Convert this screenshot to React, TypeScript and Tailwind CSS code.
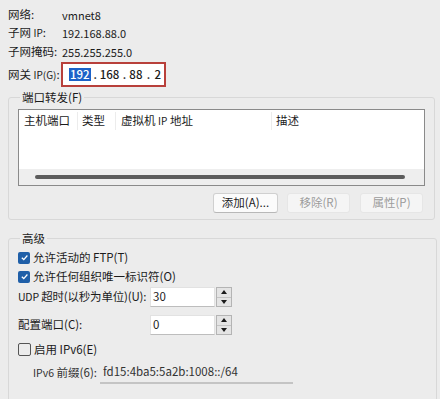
import React from "react";

function Spinner() {
  return (
    <div className="ml-[1px] flex h-[20px] w-[16px] flex-col border border-[#b4b4b4] bg-[#e4e4e4]">
      <div className="flex flex-1 items-center justify-center border-b border-[#c4c4c4]">
        <div className="h-0 w-0 border-x-[3.5px] border-b-[4px] border-x-transparent border-b-[#1b1b1b]" />
      </div>
      <div className="flex flex-1 items-center justify-center">
        <div className="h-0 w-0 border-x-[3.5px] border-t-[4px] border-x-transparent border-t-[#1b1b1b]" />
      </div>
    </div>
  );
}

function Checkbox({ checked, label }: { checked: boolean; label: string }) {
  return (
    <div className="flex h-[19px] items-center whitespace-nowrap">
      {checked ? (
        <div className="flex h-[12px] w-[12px] items-center justify-center rounded-[2px] bg-[#1f5fa8]">
          <svg width="9" height="9" viewBox="0 0 10 10">
            <path d="M2 5.2 L4.2 7.3 L8.2 2.8" fill="none" stroke="white" strokeWidth="1.4" />
          </svg>
        </div>
      ) : (
        <div className="h-[13px] w-[13px] rounded-[2px] border border-[#555]" />
      )}
      <span className="ml-[3px]">{label}</span>
    </div>
  );
}

function Button({ label, disabled, className }: { label: string; disabled?: boolean; className: string }) {
  return (
    <div
      className={
        disabled
          ? `flex h-[20px] items-center justify-center rounded-[3px] border border-[#e6e6e6] bg-[#f5f5f5] text-[#9c9c9c] ${className}`
          : `flex h-[20px] items-center justify-center rounded-[3px] border border-[#d0d0d0] border-b-[#b8b8b8] bg-[#fbfbfb] ${className}`
      }
    >
      {label}
    </div>
  );
}

export default function App() {
  return (
    <div className="h-[399px] w-[440px] overflow-hidden whitespace-nowrap bg-[#ececec] font-['Noto_Sans_CJK_SC','Noto_Sans',sans-serif] text-[11.5px] leading-none text-[#1b1b1b]">
      {/* Info */}
      <div className="pl-[8px] pt-[6px]">
        <div className="flex h-[18px] items-center">
          <span className="w-[54px] shrink-0">网络:</span>
          <span className="text-[11px]">vmnet8</span>
        </div>
        <div className="flex h-[18px] items-center">
          <span className="w-[54px] shrink-0">
            子网 <span className="text-[10px]">IP</span>:
          </span>
          <span className="text-[11px]">192.168.88.0</span>
        </div>
        <div className="flex h-[20px] items-center">
          <span className="w-[54px] shrink-0">子网掩码:</span>
          <span className="text-[11px]">255.255.255.0</span>
        </div>
        <div className="flex h-[25px] items-center">
          <span className="w-[53px] shrink-0">
            网关 <span className="text-[10px]">IP(G)</span>:
          </span>
          <div className="flex h-[25px] w-[105px] shrink-0 items-center border-2 border-[#b8403b] bg-white pl-[6px] text-[11.5px] font-medium">
            <span className="bg-[#1c62c8] px-[1px] py-[1px] text-white">192</span>
            <span className="w-[9px] text-center">.</span>
            <span>168</span>
            <span className="w-[10px] text-center">.</span>
            <span>88</span>
            <span className="w-[12px] text-center">.</span>
            <span>2</span>
          </div>
        </div>
      </div>

      {/* Port forwarding */}
      <fieldset className="ml-[8px] mr-[5px] mt-[2px] rounded-[3px] border border-[#d8d8d8] px-[9px] pb-[6px]">
        <legend className="ml-[2px] px-[2px] leading-[16px]">端口转发(F)</legend>
        <div className="mt-[4px] flex h-[77px] flex-col border border-[#8a8a8a] bg-white">
          <div className="flex h-[22px] items-center">
            <div className="w-[58px] pl-[5px]">主机端口</div>
            <div className="h-[18px] w-[1px] bg-[#ececec]" />
            <div className="w-[37px] pl-[4px]">类型</div>
            <div className="h-[18px] w-[1px] bg-[#ececec]" />
            <div className="w-[155px] pl-[5px]">
              虚拟机 <span className="text-[10px]">IP</span> 地址
            </div>
            <div className="h-[18px] w-[1px] bg-[#ececec]" />
            <div className="pl-[4px]">描述</div>
          </div>
          <div className="flex-1" />
          <div className="flex h-[16px] items-center bg-[#eeeeee] pl-[16px] pr-[19px]">
            <div className="h-[4px] flex-1 rounded-full bg-[#5c5c5c]" />
          </div>
        </div>
        <div className="mt-[7px] flex justify-end pr-[2px]">
          <Button label="添加(A)..." className="w-[65px]" />
          <Button label="移除(R)" disabled className="ml-[9px] w-[63px]" />
          <Button label="属性(P)" disabled className="ml-[10px] w-[63px]" />
        </div>
      </fieldset>

      {/* Advanced */}
      <fieldset className="ml-[8px] mr-[3px] mt-[10px] h-[200px] rounded-[3px] border border-[#d8d8d8] px-[9px]">
        <legend className="ml-[2px] px-[2px] leading-[16px]">高级</legend>
        <div className="mt-[2px]">
          <Checkbox checked label="允许活动的 FTP(T)" />
          <Checkbox checked label="允许任何组织唯一标识符(O)" />
        </div>
        <div className="mt-[1px] flex h-[20px] items-center">
          <span className="w-[132px] shrink-0 tracking-[-0.2px]">
            <span className="text-[10.5px]">UDP</span> 超时(以秒为单位)(U):
          </span>
          <div className="flex h-[20px] w-[65px] shrink-0 items-center border border-[#e2e2e2] border-b-[#bdbdbd] bg-white pl-[2px]">30</div>
          <Spinner />
        </div>
        <div className="mt-[8px] flex h-[20px] items-center">
          <span className="w-[132px] shrink-0">配置端口(C):</span>
          <div className="flex h-[20px] w-[65px] shrink-0 items-center border border-[#e2e2e2] border-b-[#bdbdbd] bg-white pl-[2px]">0</div>
          <Spinner />
        </div>
        <div className="mt-[5px]">
          <Checkbox checked={false} label="启用 IPv6(E)" />
        </div>
        <div className="mt-[3px] flex h-[22px] items-center pl-[15px]">
          <span className="w-[67px] shrink-0 text-[#333]">
            <span className="text-[10.5px]">IPv6</span> 前缀(6):
          </span>
          <div className="flex h-[22px] w-[193px] shrink-0 items-center border-b-2 border-[#c4c4c4] pl-[3px] text-[#333]">
            fd15:4ba5:5a2b:1008::/64
          </div>
        </div>
      </fieldset>
    </div>
  );
}
